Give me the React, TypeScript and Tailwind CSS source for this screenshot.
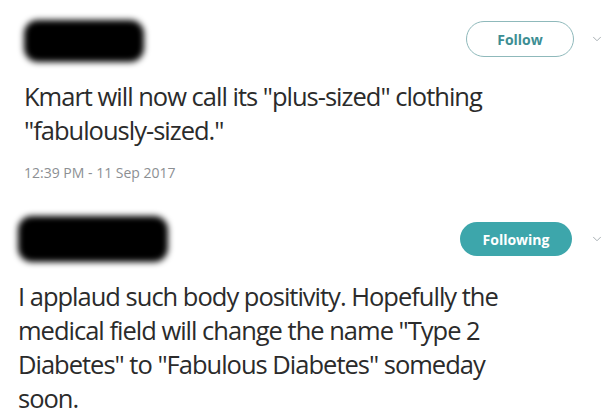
import { ChevronDown } from "lucide-react";

const Blob = ({ wide }: { wide?: boolean }) => (
  <div className={wide ? "relative h-[46px] w-[150px]" : "relative h-[42px] w-[120px]"}>
    <div className="absolute inset-0 rounded-[14px] bg-black blur-[3px]" />
  </div>
);

export default function App() {
  return (
    <div
      className="h-[418px] w-[614px] overflow-hidden bg-white text-[#2b2b2b]"
      style={{ fontFamily: '"Open Sans", "Noto Sans", sans-serif' }}
    >
      <section className="pl-[24px] pr-[10px] pt-[20px]">
        <div className="flex items-start">
          <Blob />
          <div className="ml-auto mt-[1px] flex items-center gap-[16px]">
            <button className="flex h-[36px] w-[108px] items-center justify-center rounded-full border-[1.5px] border-[#8fb9bb] text-[14px] font-bold text-[#3d8e93]">
              Follow
            </button>
            <ChevronDown className="h-[14px] w-[14px] text-[#9aa3a8]" strokeWidth={1.5} />
          </div>
        </div>
        <p className="mt-[17px] text-[25.5px] leading-[34px] tracking-[-1px]">
          Kmart will now call its "plus-sized" clothing
          <br />
          "fabulously-sized."
        </p>
        <div className="mt-[15px] text-[14px] text-[#8c8f93]">12:39 PM - 11 Sep 2017</div>
      </section>

      <section className="pl-[18px] pr-[10px] pt-[33px]">
        <div className="flex items-start">
          <Blob wide />
          <div className="ml-auto mt-[6px] flex items-center gap-[18px]">
            <button className="flex h-[34px] w-[112px] items-center justify-center rounded-full bg-[#3da6ab] text-[14px] font-bold text-white">
              Following
            </button>
            <ChevronDown className="h-[14px] w-[14px] text-[#9aa3a8]" strokeWidth={1.5} />
          </div>
        </div>
        <p className="mt-[17px] text-[25.5px] leading-[34px] tracking-[-1px]">
          I applaud such body positivity. Hopefully the
          <br />
          medical field will change the name "Type 2
          <br />
          Diabetes" to "Fabulous Diabetes" someday
          <br />
          soon.
        </p>
      </section>
    </div>
  );
}
